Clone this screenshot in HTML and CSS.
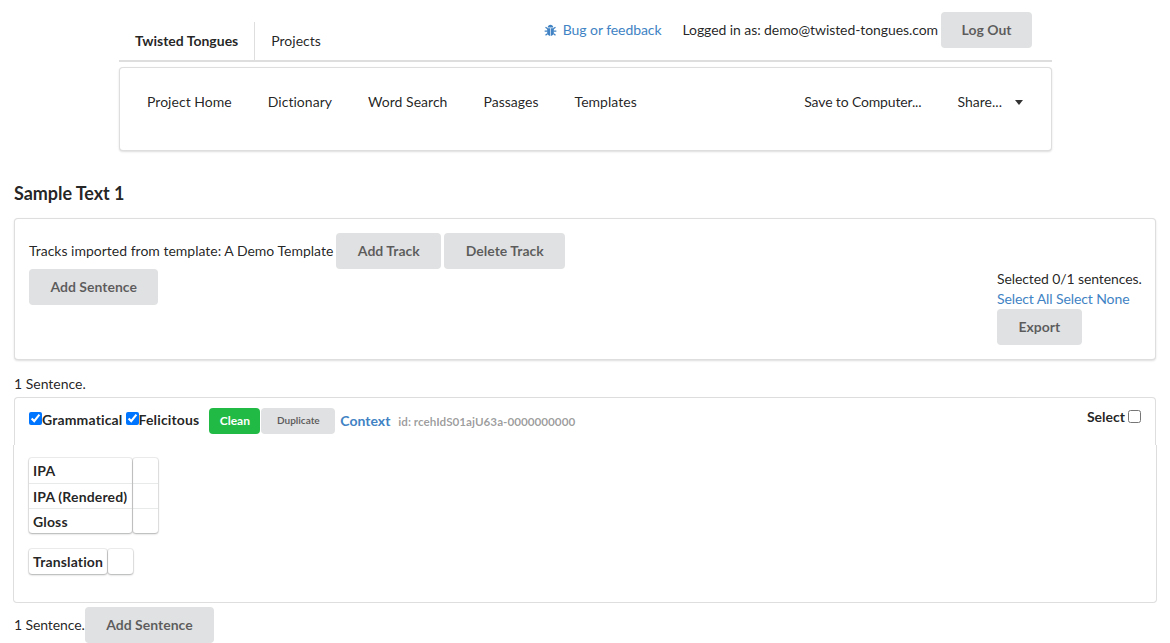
FILE: index.html
```html
<!DOCTYPE html>
<html lang="en">
<head>
    <meta charset="UTF-8">
    <meta name="viewport" content="width=device-width, initial-scale=1.0">
    <title>Twisted Tongues</title>
    <link rel="stylesheet" href="styles.css">
</head>
<body>
    <div class="top-wrap">
        <div class="top-menu">
            <a class="top-item brand">Twisted Tongues</a>
            <a class="top-item">Projects</a>
            <div class="top-right">
                <a class="link bug">
                    <svg class="bug-icon" viewBox="0 0 12 12" width="13" height="13">
                        <path fill="#4183c4" d="M3.4 3.2C3.6 1.7 4.7.8 6 .8s2.4.9 2.6 2.4zM2.9 3.9h2.8V11C4 10.8 2.9 9.4 2.9 7.6zM6.3 3.9h2.8v3.7c0 1.8-1.1 3.2-2.8 3.4z"/>
                        <path stroke="#4183c4" stroke-width="1.2" fill="none" d="M3.4 4.4 1.4 3M8.6 4.4l2-1.4M3 6.5H.6M9 6.5h2.4M3.4 8.8 1.4 10.4M8.6 8.8l2 1.6"/>
                    </svg>
                    Bug or feedback
                </a>
                <span class="logged">Logged in as: demo@twisted-tongues.com</span>
                <button class="btn logout">Log Out</button>
            </div>
        </div>
        <div class="segment nav">
            <a class="nav-item">Project Home</a>
            <a class="nav-item">Dictionary</a>
            <a class="nav-item">Word Search</a>
            <a class="nav-item">Passages</a>
            <a class="nav-item">Templates</a>
            <a class="nav-item push">Save to Computer...</a>
            <a class="nav-item share">Share... <span class="caret"></span></a>
        </div>
    </div>

    <h3 class="title">Sample Text 1</h3>

    <div class="segment tools">
        <div class="tools-left">
            <div class="tools-row">
                <span>Tracks imported from template: A Demo Template</span>
                <button class="btn">Add Track</button>
                <button class="btn">Delete Track</button>
            </div>
            <button class="btn">Add Sentence</button>
        </div>
        <div class="tools-right">
            <div class="selected-count">Selected 0/1 sentences.</div>
            <div class="select-links"><a class="link">Select All</a> <a class="link">Select None</a></div>
            <button class="btn">Export</button>
        </div>
    </div>

    <p class="count">1 Sentence.</p>

    <div class="segment sentence-head">
        <label class="check"><input type="checkbox" checked>Grammatical</label>
        <label class="check"><input type="checkbox" checked>Felicitous</label>
        <button class="btn small green">Clean</button>
        <button class="btn small">Duplicate</button>
        <a class="link context">Context</a>
        <span class="sentence-id">id: rcehIdS01ajU63a-0000000000</span>
        <label class="select-box">Select <input type="checkbox"></label>
    </div>
    <div class="segment sentence-body">
        <div class="track-table">
            <div class="track-labels wide">
                <div class="track-label">IPA</div>
                <div class="track-label">IPA (Rendered)</div>
                <div class="track-label">Gloss</div>
            </div>
            <div class="track-cells">
                <div class="track-cell"></div>
                <div class="track-cell"></div>
                <div class="track-cell"></div>
            </div>
        </div>
        <div class="track-table translation">
            <div class="track-labels">
                <div class="track-label">Translation</div>
            </div>
            <div class="track-cells">
                <div class="track-cell"></div>
            </div>
        </div>
    </div>

    <div class="bottom-row">
        <span class="count-inline">1 Sentence.</span>
        <button class="btn">Add Sentence</button>
    </div>
</body>
</html>
```

FILE: styles.css
```css
* {
    box-sizing: border-box;
}
html, body {
    overflow: hidden;
}
body {
    margin: 0;
    padding: 0 14px;
    height: 643px;
    font-family: Lato, "Open Sans", Arial, sans-serif;
    font-size: 14px;
    line-height: 20px;
    color: rgba(0, 0, 0, 0.87);
    background-color: #fff;
}
.link {
    color: #4183c4;
    cursor: pointer;
}
.btn {
    height: 36px;
    padding: 0 21.5px 2px;
    font-family: inherit;
    font-size: 14px;
    font-weight: 700;
    color: rgba(0, 0, 0, 0.6);
    background-color: #e0e1e2;
    border: none;
    border-radius: 4px;
    cursor: pointer;
}
.btn.logout {
    padding: 0 20.5px 2px;
}
.segment {
    background-color: #fff;
    border: 1px solid rgba(34, 36, 38, 0.15);
    border-radius: 4px;
    box-shadow: 0 1px 2px 0 rgba(34, 36, 38, 0.15);
}

/* top bar */
.top-wrap {
    width: 933px;
    margin-left: 105px;
}
.top-menu {
    display: flex;
    align-items: stretch;
    height: 62px;
    border-bottom: 2px solid rgba(34, 36, 38, 0.15);
}
.top-item {
    align-self: flex-end;
    height: 38px;
    padding: 9px 16px 0;
}
.top-item.brand {
    font-weight: 700;
    border-right: 1px solid rgba(34, 36, 38, 0.15);
}
.top-right {
    display: flex;
    align-items: center;
    margin-left: auto;
    height: 36px;
    margin-top: 12px;
    padding-right: 20px;
}
.bug {
    display: flex;
    align-items: center;
    gap: 6px;
    margin-right: 21px;
    letter-spacing: -0.07px;
}
.logged {
    margin-right: 3px;
    letter-spacing: -0.08px;
}
.nav {
    display: flex;
    height: 84px;
    margin-top: 5px;
    padding: 24px 12px 0;
}
.nav-item {
    height: 20px;
    padding: 0 15px;
    margin-right: 6px;
    letter-spacing: 0.03px;
}
.nav-item.push {
    margin-left: auto;
    letter-spacing: -0.15px;
}
.nav-item.share {
    display: flex;
    align-items: center;
    gap: 13px;
    margin-right: 0;
    padding-right: 16px;
}
.caret {
    width: 0;
    height: 0;
    border-left: 4.5px solid transparent;
    border-right: 4.5px solid transparent;
    border-top: 5px solid rgba(0, 0, 0, 0.8);
}

/* main */
.title {
    margin: 32px 0 15px;
    font-size: 18px;
    line-height: 20px;
    font-weight: 700;
    letter-spacing: -0.05px;
}
.tools {
    display: flex;
    justify-content: space-between;
    height: 142px;
    padding: 14px;
}
.tools-row {
    display: flex;
    align-items: center;
    gap: 3px;
}
.tools-right {
    width: 144px;
    margin-top: 36px;
    white-space: nowrap;
}
.selected-count, .select-links {
    letter-spacing: -0.1px;
}
.count {
    margin: 14px 0 3px;
    height: 20px;
}
.sentence-head {
    display: flex;
    align-items: flex-start;
    height: 48px;
    padding: 14px 14px 0;
    border-bottom: none;
    border-radius: 4px 4px 0 0;
    box-shadow: none;
}
.check {
    display: flex;
    align-items: center;
    margin-top: -1px;
    margin-right: 3px;
    height: 18px;
    font-weight: 700;
    letter-spacing: 0.15px;
}
.check input {
    margin: 0 0 3px;
    width: 13px;
    height: 13px;
}
.btn.small {
    width: 74px;
    height: 26px;
    padding: 0 0 2px;
    font-size: 10px;
    margin-top: -4px;
    margin-right: 1px;
}
.btn.green {
    width: 51px;
    margin-left: 7px;
    padding: 0 0 2px;
    font-size: 12px;
    color: #fff;
    background-color: #21ba45;
}
.context {
    margin-top: -1px;
    margin-left: 4px;
    font-size: 14px;
    font-weight: 700;
    height: 18px;
}
.sentence-id {
    margin-top: -1px;
    margin-left: 8px;
    font-size: 11.7px;
    font-weight: 700;
    color: rgba(0, 0, 0, 0.4);
    height: 18px;
}
.select-box {
    display: flex;
    align-items: center;
    gap: 3px;
    margin-left: auto;
    height: 14px;
    margin-top: -2px;
    font-weight: 700;
}
.select-box input {
    margin: 0 0 2px;
    width: 13px;
    height: 13px;
}
.sentence-body {
    height: 158px;
    margin: 0 -1px;
    padding: 13px 15px 0;
    border-top: none;
    border-radius: 0 0 4px 4px;
    box-shadow: none;
}
.track-table {
    display: flex;
    gap: 1px;
    width: fit-content;
}
.track-table.translation {
    margin-top: 16px;
}
.track-labels, .track-cells {
    border-radius: 3px;
    box-shadow: 0 1px 2px 0 rgba(34, 36, 38, 0.3), 0 0 0 1px rgba(34, 36, 38, 0.08);
}
.track-labels.wide {
    width: 103px;
}
.track-label {
    height: 25px;
    padding: 0 4px;
    font-weight: 700;
    line-height: 25px;
    letter-spacing: 0.15px;
    border-top: 1px solid rgba(34, 36, 38, 0.1);
}
.track-label:first-child, .track-cell:first-child {
    border-top: none;
}
.track-cell {
    width: 25px;
    height: 25px;
    border-top: 1px solid rgba(34, 36, 38, 0.1);
}
.bottom-row {
    display: flex;
    align-items: center;
    margin-top: 4px;
}
.count-inline {
    letter-spacing: -0.1px;
}
```
